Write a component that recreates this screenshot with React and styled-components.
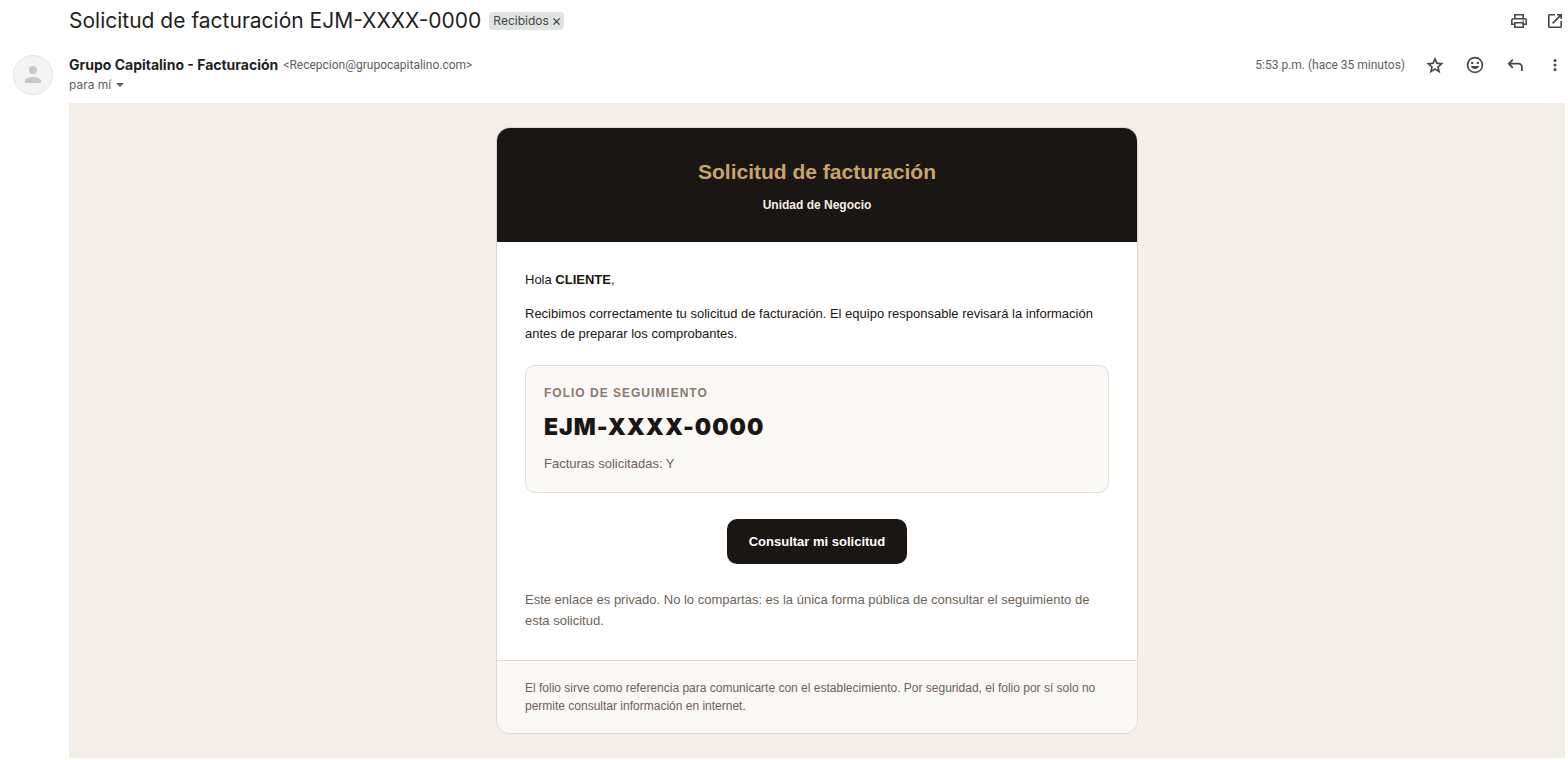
import React from "react";
import styled, { createGlobalStyle } from "styled-components";

const GlobalStyle = createGlobalStyle`
  * { box-sizing: border-box; }
  body { margin: 0; background: #fff; font-family: Inter, "Liberation Sans", sans-serif; }
  h1, h2, p { margin: 0; }
`;

const Page = styled.main`
  display: grid;
  grid-template-columns: 69px minmax(0, 1fr);
  padding-right: 3px;
`;

const SubjectBar = styled.header`
  grid-column: 2;
  display: flex;
  align-items: center;
  justify-content: space-between;
  height: 42px;
`;

const SubjectGroup = styled.div`
  display: flex;
  align-items: center;
  gap: 8px;
`;

const Subject = styled.h1`
  font: 400 21px/28px Inter, sans-serif;
  color: #1f1f1f;
`;

const Label = styled.span`
  display: flex;
  align-items: center;
  gap: 4px;
  height: 18px;
  padding: 0 4px;
  border-radius: 4px;
  background: #e1e3e1;
  color: #444746;
  font-size: 12px;
  line-height: 18px;
`;

const LabelRemove = styled.button`
  display: flex;
  padding: 0;
  border: 0;
  background: none;
  color: inherit;
`;

const Actions = styled.div`
  display: flex;
  align-items: center;
  gap: ${(p) => p.$gap}px;
`;

const IconButton = styled.button`
  display: flex;
  padding: 0;
  border: 0;
  background: none;
  color: #444746;
`;

const AvatarCell = styled.div`
  padding: 13px 0 0 13px;
`;

const Avatar = styled.div`
  display: flex;
  align-items: center;
  justify-content: center;
  width: 40px;
  height: 40px;
  border: 1px solid #e4e4e4;
  border-radius: 50%;
  background: #f4f4f4;
`;

const SenderBar = styled.div`
  display: flex;
  justify-content: space-between;
  align-items: flex-start;
  padding: 13px 0 8px;
`;

const SenderLine = styled.div`
  display: flex;
  align-items: center;
  gap: 5px;
  height: 20px;
`;

const SenderName = styled.span`
  font: 700 14px/20px Inter, sans-serif;
  color: #1f1f1f;
`;

const Meta = styled.span`
  font: 400 12px/20px Roboto, sans-serif;
  color: #5e5e5e;
`;

const RecipientButton = styled.button`
  display: flex;
  align-items: center;
  gap: 5px;
  height: 20px;
  padding: 0;
  border: 0;
  background: none;
  font: 400 12px/20px Inter, sans-serif;
  color: #5e5e5e;
`;

const SenderActions = styled.div`
  display: flex;
  align-items: center;
  gap: 20px;
  height: 20px;
`;

const Message = styled.article`
  grid-column: 2;
  padding: 24px;
  background: #f4eee8;
  font-family: "Liberation Sans", Arial, sans-serif;
  font-size: 13px;
  line-height: 20px;
  color: #1a1613;
`;

const Card = styled.section`
  max-width: 642px;
  margin: 0 auto;
  border: 1px solid #dfd5c9;
  border-radius: 14px;
  background: #fff;
  overflow: hidden;
`;

const CardHeader = styled.div`
  display: flex;
  flex-direction: column;
  gap: 8px;
  padding: 28px;
  background: #1a1613;
  text-align: center;
`;

const CardTitle = styled.h2`
  font-size: 21px;
  line-height: 32px;
  color: #c8a46b;
`;

const Unit = styled.p`
  font-size: 12px;
  font-weight: 700;
  line-height: 18px;
  color: #f4eee8;
`;

const CardBody = styled.div`
  padding: 28px 28px 29px;
`;

const Greeting = styled.p`
  margin-bottom: 14px;
`;

const FolioBox = styled.div`
  margin: 21px 0 26px;
  padding: 18px;
  border: 1px solid #e2ddd0;
  border-radius: 10px;
  background: #faf8f5;
`;

const FolioLabel = styled.p`
  font-size: 12px;
  font-weight: 700;
  line-height: 18px;
  letter-spacing: 1px;
  text-transform: uppercase;
  color: #8a7a6c;
`;

const FolioNumber = styled.p`
  margin: 6px 0 8px;
  font: 900 23px/38px Inter, sans-serif;
  letter-spacing: 1px;
`;

const FolioDetail = styled.p`
  color: #6d6259;
`;

const ButtonRow = styled.div`
  display: flex;
  justify-content: center;
`;

const LinkButton = styled.a`
  padding: 13px 22px 12px;
  border-radius: 10px;
  background: #1a1613;
  color: #fff;
  font-weight: 700;
  text-decoration: none;
`;

const PrivacyNote = styled.p`
  margin-top: 25px;
  line-height: 21px;
  color: #6d6259;
`;

const CardFooter = styled.footer`
  padding: 18px 28px;
  border-top: 1px solid #e6dccf;
  background: #faf8f5;
  font-size: 12px;
  line-height: 18px;
  color: #6d6259;
`;

const Icon = ({ d, size = 20, box = "0 0 20 20" }) => (
  <svg width={size} height={size} viewBox={box} fill="currentColor" fillRule="evenodd" aria-hidden="true">
    <path d={d} />
  </svg>
);

const icons = {
  print:
    "M5 3h10v4h-1.600V4.600h-6.800V7H5zM4.500 7h11A2.500 2.500 0 0 1 18 9.500V14h-3v3H5v-3H2V9.500A2.500 2.500 0 0 1 4.500 7zM3.600 12.400H5V11h10v1.400h1.400v-2.900a.9.9 0 0 0-.9-.9h-11a.9.9 0 0 0-.9.9zM6.600 12.600v2.800h6.800v-2.800zM13.500 9.200h1.500v1.200h-1.500z",
  open:
    "M4.500 3H10v1.600H4.600v10.800h10.800V10H17v5.500a1.500 1.500 0 0 1-1.500 1.500h-11A1.500 1.500 0 0 1 3 15.500v-11A1.500 1.500 0 0 1 4.500 3zM12 3h5v5h-1.600V5.750l-7.250 7.250L7 11.850l7.250-7.250H12z",
  star:
    "M10 1.800l2.450 5.750 6.150.520-4.660 4.060L15.320 18.200 10 15 4.680 18.200l1.380-6.070L1.400 8.070l6.150-.520zM10 5.900L8.700 9.100l-3.400.300 2.600 2.250-.800 3.300L10 13.100l2.900 1.850-.8-3.300 2.600-2.250L11.300 9.100z",
  smile:
    "M10 1.700a8.300 8.300 0 1 1 0 16.600 8.300 8.300 0 0 1 0-16.600zM10 3.400a6.600 6.600 0 1 0 0 13.200 6.600 6.600 0 0 0 0-13.200zM7.200 6.700a1.200 1.200 0 1 1 0 2.400 1.200 1.200 0 0 1 0-2.400zM12.800 6.700a1.200 1.200 0 1 1 0 2.400 1.200 1.200 0 0 1 0-2.400zM5.800 11h8.400a4.500 4.500 0 0 1-8.400 0z",
  reply:
    "M7.200 4l1.240 1.240L5.900 7.800H13.500A4.300 4.300 0 0 1 17.800 12.100V16H16v-3.900a2.500 2.500 0 0 0-2.500-2.500H5.900l2.540 2.560L7.200 13.400 2.500 8.700z",
  more:
    "M10 4a1.500 1.500 0 1 1 0 3 1.500 1.500 0 0 1 0-3zM10 8.500a1.500 1.500 0 1 1 0 3 1.500 1.500 0 0 1 0-3zM10 13a1.500 1.500 0 1 1 0 3 1.500 1.500 0 0 1 0-3z",
  close: "M1 0l3 3 3-3 1 1-3 3 3 3-1 1-3-3-3 3-1-1 3-3-3-3z",
  person: "M8 0a4 4 0 1 1 0 8 4 4 0 0 1 0-8zM0 17v-2.200c0-2.600 5.300-3.800 8-3.800s8 1.200 8 3.800V17z",
  caret: "M0 2h8L4 6z",
};

export default function App() {
  return (
    <>
      <GlobalStyle />
      <Page>
        <SubjectBar>
          <SubjectGroup>
            <Subject>Solicitud de facturación EJM-XXXX-0000</Subject>
            <Label>
              Recibidos
              <LabelRemove type="button" aria-label="Quitar etiqueta">
                <Icon d={icons.close} size={7} box="0 0 8 8" />
              </LabelRemove>
            </Label>
          </SubjectGroup>
          <Actions $gap={16}>
            <IconButton type="button" aria-label="Imprimir"><Icon d={icons.print} /></IconButton>
            <IconButton type="button" aria-label="Abrir en ventana nueva"><Icon d={icons.open} /></IconButton>
          </Actions>
        </SubjectBar>

        <AvatarCell>
          <Avatar>
            <svg width="16" height="18" viewBox="0 0 16 18" fill="#c8c8c8" aria-hidden="true">
              <path d={icons.person} />
            </svg>
          </Avatar>
        </AvatarCell>
        <SenderBar>
          <div>
            <SenderLine>
              <SenderName>Grupo Capitalino - Facturación</SenderName>
              <Meta>&lt;Recepcion@grupocapitalino.com&gt;</Meta>
            </SenderLine>
            <RecipientButton type="button">
              para mí
              <Icon d={icons.caret} size={8} box="0 0 8 8" />
            </RecipientButton>
          </div>
          <SenderActions>
            <Meta>5:53 p.m. (hace 35 minutos)</Meta>
            <Actions $gap={20}>
              <IconButton type="button" aria-label="Destacar"><Icon d={icons.star} /></IconButton>
              <IconButton type="button" aria-label="Reaccionar"><Icon d={icons.smile} /></IconButton>
              <IconButton type="button" aria-label="Responder"><Icon d={icons.reply} /></IconButton>
              <IconButton type="button" aria-label="Más opciones"><Icon d={icons.more} /></IconButton>
            </Actions>
          </SenderActions>
        </SenderBar>

        <Message>
          <Card>
            <CardHeader>
              <CardTitle>Solicitud de facturación</CardTitle>
              <Unit>Unidad de Negocio</Unit>
            </CardHeader>
            <CardBody>
              <Greeting>Hola <strong>CLIENTE</strong>,</Greeting>
              <p>
                Recibimos correctamente tu solicitud de facturación. El equipo responsable revisará la
                información antes de preparar los comprobantes.
              </p>
              <FolioBox>
                <FolioLabel>Folio de seguimiento</FolioLabel>
                <FolioNumber>EJM-XXXX-0000</FolioNumber>
                <FolioDetail>Facturas solicitadas: Y</FolioDetail>
              </FolioBox>
              <ButtonRow>
                <LinkButton href="#solicitud">Consultar mi solicitud</LinkButton>
              </ButtonRow>
              <PrivacyNote>
                Este enlace es privado. No lo compartas: es la única forma pública de consultar el
                seguimiento de esta solicitud.
              </PrivacyNote>
            </CardBody>
            <CardFooter>
              El folio sirve como referencia para comunicarte con el establecimiento. Por seguridad, el
              folio por sí solo no permite consultar información en internet.
            </CardFooter>
          </Card>
        </Message>
      </Page>
    </>
  );
}
